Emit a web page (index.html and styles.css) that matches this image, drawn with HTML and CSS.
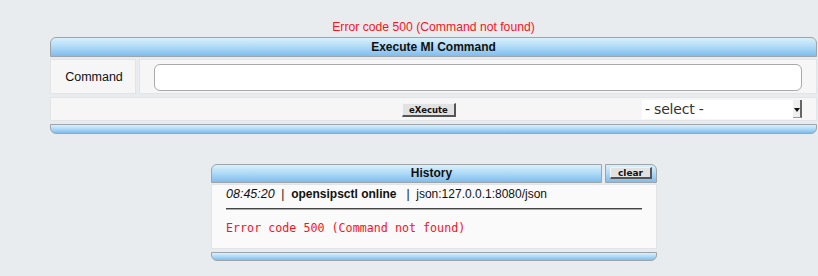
FILE: index.html
```html
<!DOCTYPE html>
<html>
<head>
<meta charset="utf-8">
<link rel="stylesheet" href="styles.css">
</head>
<body>
<div class="page">
  <div class="top-error">Error code 500 (Command not found)</div>
  <div class="panel">
    <div class="bar bar-head">Execute MI Command</div>
    <div class="row row-cmd">
      <div class="cell cell-label">Command</div>
      <div class="cell cell-input"><div class="input"></div></div>
    </div>
    <div class="row">
      <div class="cell cell-actions">
        <span class="btn btn-exec">eXecute</span>
        <div class="select"><span class="select-text">- select -</span><span class="select-arrow"></span></div>
      </div>
    </div>
    <div class="bar bar-foot"></div>
  </div>

  <div class="history">
    <div class="hist-head">
      <div class="bar hist-title">History</div>
      <div class="bar hist-clear"><span class="btn btn-clear">clear</span></div>
    </div>
    <div class="hist-body">
      <div class="hist-line"><i>08:45:20</i> &nbsp;| &nbsp;<b>opensipsctl online</b> &nbsp; | &nbsp;json:127.0.0.1:8080/json</div>
      <div class="hist-rule"></div>
      <div class="hist-msg">Error code 500 (Command not found)</div>
    </div>
    <div class="bar hist-foot"></div>
  </div>
</div>
</body>
</html>
```
FILE: styles.css
```css
html, body {
  margin: 0;
  padding: 0;
  background: #e9ecef;
  font-family: "Liberation Sans", Arial, sans-serif;
  font-size: 12px;
  color: #111;
}
.page {
  padding-left: 50px;
  width: 767px;
}
.top-error {
  padding-top: 20px;
  height: 17px;
  line-height: 14px;
  text-align: center;
  color: #f5141e;
  font-size: 12.2px;
}
.panel {
  display: flex;
  flex-direction: column;
  gap: 3px;
}
.bar {
  box-sizing: border-box;
  border: 1px solid #9ea4a8;
  background: linear-gradient(to bottom, #d9f0fc 0%, #b2dcf7 45%, #7fbdee 100%);
}
.bar-head {
  height: 20px;
  border-radius: 6px 6px 0 0;
  text-align: center;
  font-weight: bold;
  line-height: 18px;
  margin-bottom: -1px;
}
.bar-foot {
  height: 10px;
  border-radius: 0 0 6px 6px;
}
.row {
  display: flex;
  gap: 3px;
}
.cell {
  box-sizing: border-box;
  background: #f6f6f6;
  border: 1px solid #e2e4e6;
}
.row-cmd .cell {
  height: 35px;
}
.cell-label {
  width: 86px;
  display: flex;
  align-items: center;
  justify-content: center;
  font-size: 12.5px;
  padding-left: 2px;
}
.cell-input {
  flex: 1;
  padding: 4px 14px 0 14px;
}
.input {
  height: 27px;
  box-sizing: border-box;
  background: #fff;
  border: 1px solid #a9a9a9;
  border-radius: 6px;
}
.cell-actions {
  flex: 1;
  height: 24px;
  display: flex;
  align-items: center;
  padding-left: 351px;
}
.btn {
  box-sizing: border-box;
  display: inline-flex;
  align-items: center;
  justify-content: center;
  background: #e2e2e2;
  border-top: 1px solid #f4f4f4;
  border-left: 1px solid #f4f4f4;
  border-right: 2px solid #555;
  border-bottom: 2px solid #555;
  font-family: "DejaVu Sans", sans-serif;
  font-weight: bold;
  font-size: 8.5px;
  color: #111;
}
.btn-exec {
  width: 54px;
  height: 14px;
  margin-top: 2px;
}
.select {
  margin-left: 186px;
  width: 160px;
  height: 19px;
  background: #fff;
  display: flex;
  align-items: center;
  justify-content: space-between;
  position: relative;
}
.select-text {
  font-family: "DejaVu Sans", sans-serif;
  font-size: 14px;
  color: #333;
  padding-left: 3px;
  letter-spacing: -0.2px;
}
.select-arrow {
  box-sizing: border-box;
  width: 9px;
  height: 18px;
  background: #efefef;
  border-right: 2px solid #666;
  border-bottom: 1px solid #999;
  position: relative;
}
.select-arrow::after {
  content: "";
  position: absolute;
  left: 1px;
  top: 8px;
  border-left: 3px solid transparent;
  border-right: 3px solid transparent;
  border-top: 4px solid #111;
}
.history {
  margin-top: 30px;
  margin-left: 161px;
  width: 446px;
  display: flex;
  flex-direction: column;
}
.hist-head {
  display: flex;
  gap: 3px;
}
.hist-title {
  width: 391px;
  height: 19px;
  border-radius: 6px 0 0 0;
  text-align: center;
  font-weight: bold;
  line-height: 17px;
  padding-left: 50px;
}
.hist-clear {
  flex: 1;
  height: 19px;
  border-radius: 0 6px 0 0;
  display: flex;
  align-items: flex-start;
  padding: 2px 0 0 4px;
}
.btn-clear {
  width: 42px;
  height: 12px;
  font-size: 9px;
}
.hist-body {
  box-sizing: border-box;
  margin-top: 1px;
  height: 65px;
  background: #fafafa;
  border: 1px solid #e2e4e6;
  padding: 1px 15px 0 14px;
}
.hist-line {
  line-height: 16px;
  white-space: nowrap;
}
.hist-line i {
  font-size: 12.5px;
}
.hist-rule {
  margin-top: 6px;
  width: 416px;
  height: 1px;
  background: #444;
  border-bottom: 1px solid #aaa;
}
.hist-msg {
  margin-top: 11px;
  font-family: "DejaVu Sans Mono", monospace;
  font-size: 11.7px;
  color: #f5141e;
  white-space: nowrap;
}
.hist-foot {
  margin-top: 3px;
  height: 9px;
  border-radius: 0 0 6px 6px;
}
```
